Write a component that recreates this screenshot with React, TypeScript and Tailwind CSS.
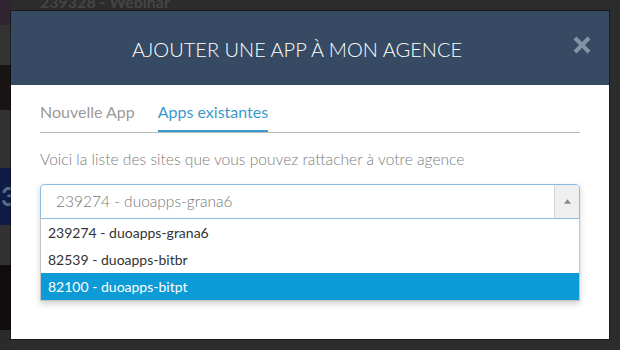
import React from 'react';

const options = [
  { id: 239274, name: 'duoapps-grana6' },
  { id: 82539, name: 'duoapps-bitbr' },
  { id: 82100, name: 'duoapps-bitpt' },
];

const App: React.FC = () => {
  const selected = options[0];
  const highlighted = 82100;

  return (
    <div className="relative w-[620px] h-[350px] overflow-hidden bg-[#2c2c2c] font-['Lato','Liberation_Sans',sans-serif]">
      {/* page behind the overlay */}
      <div className="flex h-full">
        <div className="flex flex-col w-[11px]">
          <div className="h-[25px] bg-[#2e2530]" />
          <div className="h-[40px] bg-[#333333]" />
          <div className="h-[45px] bg-[#1a1515]" />
          <div className="h-[58px] bg-[#323232]" />
          <div className="h-[57px] bg-[#0f1b44] text-[#5d6a8c] text-[26px] leading-[57px] font-bold pl-[1px] overflow-hidden">3</div>
          <div className="h-[40px] bg-[#323232]" />
          <div className="h-[65px] bg-[#120d0d]" />
          <div className="flex-1 bg-[#2b2b2b]" />
        </div>
        <div className="flex-1">
          <div className="pl-[29px] -mt-[10px] text-[16px] font-bold text-[#454545]">239328 - Webinar</div>
        </div>
      </div>

      {/* modal */}
      <div className="absolute left-[11px] top-[11px] w-[598px] h-[328px] bg-white shadow-[0_0_0_1px_rgba(0,0,0,0.4)]">
        <div className="relative h-[74px] bg-[#364b63] flex items-center justify-center pr-[26px]">
          <h2 className="text-[20px] text-white font-light mt-[1px]">AJOUTER UNE APP À MON AGENCE</h2>
          <button className="absolute right-[17px] top-[24px] w-[20px] h-[20px] text-[#8394a7]">
            <svg viewBox="0 0 20 20" className="w-[20px] h-[20px]">
              <path d="M3 3 L17 17 M17 3 L3 17" stroke="currentColor" strokeWidth="4" strokeLinecap="butt" />
            </svg>
          </button>
        </div>

        <div className="px-[29px]">
          <div className="flex gap-[23px] border-b border-[#b8b8b8] pt-[15px] text-[16px]">
            <button className="pb-[8px] text-[#9a9a9a]">Nouvelle App</button>
            <button className="pb-[6px] text-[#3a9acb] border-b-[2px] border-[#3a9acb]">Apps existantes</button>
          </div>

          <p className="mt-[16px] text-[15.6px] font-light text-[#7d7d7d] leading-[20px]">
            Voici la liste des sites que vous pouvez rattacher à votre agence
          </p>

          <div className="mt-[15px] shadow-[0_3px_6px_rgba(0,0,0,0.18)]">
            <div className="flex h-[35px] border border-[#8cbce4] rounded-t-[4px] overflow-hidden">
              <div className="flex-1 flex items-center pl-[15px] text-[15.5px] font-light text-[#777777]">
                {selected.id} - {selected.name}
              </div>
              <div className="w-[25px] bg-[#efefef] border-l border-[#d4d4d4] flex items-center justify-center">
                <svg viewBox="0 0 8 5" className="w-[7px] h-[5px]">
                  <path d="M0 5 L4 0 L8 5 Z" fill="#888888" />
                </svg>
              </div>
            </div>
            <ul className="border border-t-0 border-[#c4c4c4]">
              {options.map(o => (
                <li
                  key={o.id}
                  className={
                    o.id === highlighted
                      ? 'h-[27px] flex items-center pl-[7px] text-[14px] bg-[#0c9bd7] text-white'
                      : 'h-[27px] flex items-center pl-[7px] text-[14px] text-[#333333]'
                  }
                >
                  {o.id} - {o.name}
                </li>
              ))}
            </ul>
          </div>
        </div>
      </div>
    </div>
  );
};

export default App;
